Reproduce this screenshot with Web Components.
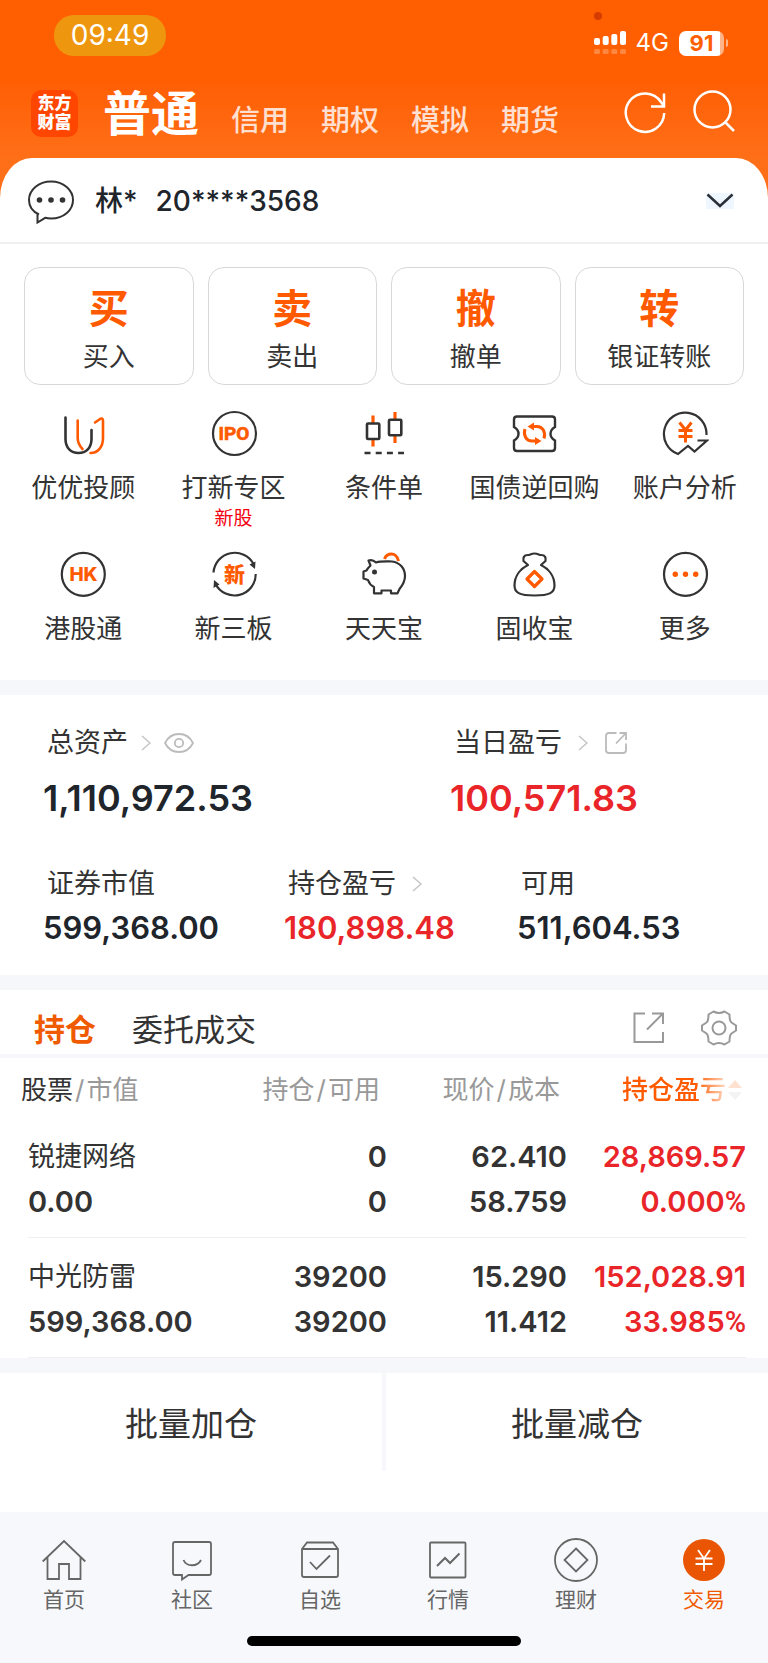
<!DOCTYPE html>
<html lang="zh-CN">
<head>
<meta charset="utf-8">
<meta name="viewport" content="width=device-width, initial-scale=1">
<title>交易</title>
<style>
    body {
        margin: 0;
        background: #f6f7fa;
        color: #333;
        font-family: Inter, "Noto Sans CJK SC", sans-serif;
    }
</style>
</head>
<body>
<trade-page></trade-page>

<script>
const ORANGE = '#ff5a00';

// name: [width, height, markup]
const ICONS = {
    signal: [32, 24, `<g fill="#fff"><rect y="7" width="6" height="7" rx="2"/><rect x="8.700" y="5" width="6" height="9" rx="2"/><rect x="17.300" y="3" width="6" height="11" rx="2"/><rect x="26" width="6" height="14" rx="2"/></g>
        <g fill="#fff" opacity=".25"><rect y="18" width="6" height="5" rx="1.500"/><rect x="8.700" y="18" width="6" height="5" rx="1.500"/><rect x="17.300" y="18" width="6" height="5" rx="1.500"/><rect x="26" y="18" width="6" height="5" rx="1.500"/></g>`],
    refresh: [44, 44, `<g fill="none" stroke="#fff" stroke-width="2.500"><path d="M41.200 23A19.200 19.200 0 1 1 38 12L41 16"/><path d="M41 3.500V16.500H28"/></g>`],
    search: [44, 44, `<g fill="none" stroke="#fff" stroke-width="2.500"><circle cx="21.500" cy="19.500" r="18"/><path d="M33.500 31.500L43 41"/></g>`],
    chat: [48, 48, `<path d="M12 37.500C5.500 34.500 2 29.500 2 23C2 13 11.500 4.500 24 4.500s22 8.500 22 18.500S37 41.500 24 41.500c-2 0-4-.2-5.800-.7L10.500 45.500V37" fill="none" stroke="#333" stroke-width="2"/><g fill="#333"><circle cx="12.500" cy="23" r="2.800"/><circle cx="24" cy="23" r="2.800"/><circle cx="35.500" cy="23" r="2.800"/></g>`],
    down: [28, 16, `<rect width="28" height="16" fill="#eef6ff"/><path d="M1.500 1.500L14 13L26.500 1.500" fill="none" stroke="#2b2f36" stroke-width="2.500"/>`],
    right: [10, 16, `<path d="M1 1L9 8L1 15" fill="none" stroke="#c4c4c4" stroke-width="1.500"/>`],
    eye: [30, 20, `<g fill="none" stroke="#bbb" stroke-width="1.800"><path d="M1 10C4 4 9 1 15 1s11 3 14 9c-3 6-8 9-14 9S4 16 1 10Z"/><circle cx="15" cy="10" r="4.200"/></g>`],
    share: [24, 24, `<g fill="none" stroke="#bbb" stroke-width="1.800"><path d="M12.500 2H5Q2 2 2 5V19Q2 22 5 22H19Q22 22 22 19V12.500"/><path d="M15.500 2H22V9M22 2L12 12.500"/></g>`],
    shareBig: [36, 36, `<g fill="none" stroke="#999" stroke-width="2"><path d="M15 3.500H4.500V32H33V22"/><path d="M22 3.500H33V14M33 3.500L17 19.500"/></g>`],
    gear: [36, 36, `<g fill="none" stroke="#999" stroke-width="2" stroke-linejoin="round"><path d="M12.500 1.500Q18 4.500 23.500 1.500L28.500 4.500Q28.500 11 30.500 12.500L35 15.500V20.500L30.500 23.500Q28.500 25 28.500 31.500L23.500 34.500Q18 31.500 12.500 34.500L7.500 31.500Q7.500 25 5.500 23.500L1 20.500V15.500L5.500 12.500Q7.500 11 7.500 4.500Z"/><circle cx="18" cy="18" r="6.500"/></g>`],
    sort: [14, 20, `<path d="M7 0L14 8H0Z" fill="${ORANGE}"/><path d="M7 20L0 12H14Z" fill="#bbb"/>`],

    advisor: [48, 48, `<g fill="none" stroke-width="2.600" stroke-linecap="round"><path d="M6.500 8.500V30C6.500 39 12 44 19.500 44S32.500 39 32.500 30V21" stroke="#333"/><path d="M18.700 11.500V29c0 5 2 8 4.800 11M36 13.500L41 10Q44 8.500 44 11.500V29C44 38 39 44 31.500 44" stroke="${ORANGE}"/></g>`],
    ipo: [48, 48, `<circle cx="24.500" cy="24.500" r="21.500" fill="none" stroke="#333" stroke-width="2.200"/><text x="24" y="31" text-anchor="middle" font-family="Roboto, sans-serif" font-size="19" font-weight="700" fill="${ORANGE}" stroke="${ORANGE}" stroke-width=".6">IPO</text>`],
    candles: [48, 48, `<g fill="none" stroke-width="2.600"><path d="M13 6.500V14M13 30V37.500M35 3V10.500M35 26.500V34" stroke="${ORANGE}" stroke-width="3.200"/><g stroke="#333"><rect x="7" y="14.500" width="12.300" height="15.500" rx="1"/><rect x="29" y="10.800" width="12.300" height="15.500" rx="1"/><path d="M4.500 44H44" stroke-dasharray="6 5.200"/></g></g>`],
    ticket: [48, 48, `<path d="M7 7.500H42Q45 7.500 45 10.500V18Q40.500 20.500 40.500 24.800T45 31.500V39Q45 42 42 42H7Q4 42 4 39V31.500Q8.500 29 8.500 24.800T4 18V10.500Q4 7.500 7 7.500Z" fill="none" stroke="#333" stroke-width="2.400"/>
        <g fill="none" stroke="${ORANGE}" stroke-width="3"><path d="M22 17.500H27C32.500 17.500 36 23 34 29.500M27 32H22C16.500 32 13 26.500 15 20"/></g><path d="M17.500 17.500L24 13.500V21.500ZM31.500 32L25 28V36Z" fill="${ORANGE}"/>`],
    analysis: [48, 48, `<path d="M45.500 26A21.300 21.300 0 1 0 17 45L27 37L33.500 42.500L46 31.500H36.500" fill="none" stroke="#333" stroke-width="2.200"/><path d="M18.500 13.500L24.500 21L30.500 13.500M24.500 21V33.500M17.500 21.500H31.500M17.500 27.500H31.500" fill="none" stroke="${ORANGE}" stroke-width="3"/>`],
    hk: [48, 48, `<circle cx="24.300" cy="24.300" r="21.500" fill="none" stroke="#333" stroke-width="2.200"/><text x="24.500" y="31" text-anchor="middle" font-family="Inter, sans-serif" font-size="19" font-weight="800" fill="${ORANGE}">HK</text>`],
    neeq: [48, 48, `<path d="M3.500 22.500A21.300 21.300 0 0 1 43.500 14M45.700 24A21.300 21.300 0 0 1 5.500 34" fill="none" stroke="#333" stroke-width="2.200"/><path d="M45.500 11.500L45 19L39.500 14.500ZM3.500 38L4 30L9.500 34.500Z" fill="#333"/><text x="24.500" y="32" text-anchor="middle" font-family="Noto Sans CJK SC, sans-serif" font-size="21" font-weight="900" fill="${ORANGE}">新</text>`],
    pig: [48, 48, `<path d="M24.500 9C26 5 29 4 31.500 4S37.500 6 38.500 11" fill="none" stroke="${ORANGE}" stroke-width="3"/><path d="M8.500 10.500C11 9.500 14 10.500 16 12.500C21 11 27 11.500 32 11.500C40 12.500 45 18.500 45 26C45 32 42 36 39.500 39L37.500 43.300H31V40.500H21.500V43.300H14V37C11 35.500 9 33 8 30L3.500 28.500V21.500L6.500 20.500C7.500 18.500 9 17 10.500 15.500Z" fill="none" stroke="#333" stroke-width="2.200" stroke-linejoin="round"/><circle cx="14.500" cy="22" r="2.500" fill="#333"/>`],
    bag: [48, 48, `<path d="M18 15L13.500 11C13 8 13.500 5 18 5C20 5 21 3.500 24.500 3.500S29 5 31 5C35.500 5 36 8 35.500 11L31 15C38 18.500 44.500 25.500 44.500 35.500C44.500 42.500 40 45.500 24.500 45.500S4.500 42.500 4.500 35.500C4.500 25.500 11 18.500 18 15Z" fill="none" stroke="#333" stroke-width="2.200" stroke-linejoin="round"/><path d="M24.500 21.500L32 29L24.500 36.500L17 29Z" fill="none" stroke="${ORANGE}" stroke-width="3.200" stroke-linejoin="round"/>`],
    more: [48, 48, `<circle cx="24.500" cy="24.300" r="21.500" fill="none" stroke="#333" stroke-width="2.200"/><g fill="${ORANGE}"><circle cx="14.300" cy="24.300" r="2.700"/><circle cx="24.500" cy="24.300" r="2.700"/><circle cx="34.700" cy="24.300" r="2.700"/></g>`],

    home: [44, 44, `<path d="M.7 23.500L22 3L43.300 23.500M5.500 19.500V41H17V26H27V41H38.500V19.500" fill="none" stroke="#666" stroke-width="1.800"/>`],
    community: [44, 44, `<path d="M5 4H39Q41 4 41 6V35Q41 37 39 37H18.500L12 41.500V37H5Q3 37 3 35V6Q3 4 5 4ZM13.500 22C16.500 29 27.500 29 31 22" fill="none" stroke="#666" stroke-width="1.800"/>`],
    watch: [44, 44, `<path d="M4 11L9 4.500H35L40 11V37Q40 39 38 39H6Q4 39 4 37ZM4 11H40M12 24L18.500 31L32 17.500" fill="none" stroke="#666" stroke-width="1.800"/>`],
    chart: [44, 44, `<path d="M11 28L19 20L24 25L33.500 15.500" fill="none" stroke="#666" stroke-width="2"/><rect x="4" y="4.500" width="35.500" height="35" rx="1" fill="none" stroke="#666" stroke-width="1.800"/>`],
    wealth: [44, 44, `<g fill="none" stroke="#666" stroke-width="1.800"><circle cx="22" cy="22" r="21"/><path d="M22 10.500L33.500 22L22 33.500L10.500 22Z"/></g>`],
    trade: [44, 44, `<circle cx="22" cy="22" r="21" fill="#ea5504"/><path d="M16 12L22 20.500L28 12M22 20.500V33M13.500 20.500H30.500M13.500 26H30.500" fill="none" stroke="#fff" stroke-width="1.800"/>`]
};

class AppIcon extends HTMLElement {
    constructor() {
        super();
        this.attachShadow({ mode: 'open' });
    }

    connectedCallback() {
        const [w, h, markup] = ICONS[this.getAttribute('name')];
        this.shadowRoot.innerHTML = `
            <style>
                :host { display: inline-flex; flex: none; }
                svg { display: block; }
            </style>
            <svg width="${w}" height="${h}" viewBox="0 0 ${w} ${h}" aria-hidden="true">${markup}</svg>
        `;
    }
}

class StatusBar extends HTMLElement {
    connectedCallback() {
        this.attachShadow({ mode: 'open' }).innerHTML = `
            <style>
                :host {
                    display: flex;
                    justify-content: space-between;
                    align-items: flex-start;
                    height: 68px;
                    padding: 15px 40px 0 54px;
                    background: #ff5f00;
                    color: white;
                }
                .time {
                    width: 112px;
                    border-radius: 20px;
                    background: #ee960e;
                    font-size: 28px;
                    line-height: 41px;
                    text-align: center;
                }
                .radio {
                    position: relative;
                    display: flex;
                    align-items: center;
                    gap: 10px;
                    padding-top: 14px;
                    font-size: 24px;
                    line-height: 28px;
                }
                .mic {
                    position: absolute;
                    top: -3px;
                    left: 0;
                    width: 8px;
                    height: 8px;
                    border-radius: 50%;
                    background: #d63c00;
                }
                .battery {
                    display: flex;
                    align-items: center;
                    gap: 2px;
                }
                .level {
                    width: 45px;
                    border-radius: 7px;
                    background: linear-gradient(to right, #fff 41px, #ffb489 41px);
                    color: #ff5f00;
                    font-size: 22px;
                    font-weight: 700;
                    line-height: 25px;
                    text-align: center;
                }
                .tip {
                    width: 2px;
                    height: 8px;
                    border-radius: 0 2px 2px 0;
                    background: #ffb489;
                }
            </style>
            <span class="time">09:49</span>
            <div class="radio">
                <span class="mic"></span>
                <app-icon name="signal"></app-icon>
                <span>4G</span>
                <span class="battery"><span class="level">91</span><span class="tip"></span></span>
            </div>
        `;
    }
}

class MarketHeader extends HTMLElement {
    connectedCallback() {
        this.attachShadow({ mode: 'open' }).innerHTML = `
            <style>
                :host {
                    display: flex;
                    align-items: flex-start;
                    height: 68px;
                    padding: 7px 33px 0 31px;
                    color: white;
                }
                .logo {
                    box-sizing: border-box;
                    width: 47px;
                    height: 47px;
                    padding: 4px 0;
                    border-radius: 10px;
                    background: #ff4600;
                    font-size: 17px;
                    font-weight: 900;
                    line-height: 19px;
                    text-align: center;
                }
                nav {
                    display: flex;
                    flex: 1;
                    align-items: baseline;
                    gap: 32px;
                    margin-left: 25px;
                }
                a {
                    color: #ffdfcf;
                    font-size: 29px;
                    font-weight: 500;
                    line-height: 48px;
                    text-decoration: none;
                }
                a.on {
                    color: white;
                    font-size: 48px;
                    font-weight: 700;
                }
                button {
                    margin: 0 0 0 24px;
                    padding: 0;
                    border: 0;
                    background: none;
                }
            </style>
            <div class="logo">东方<br>财富</div>
            <nav>
                <a class="on" href="#normal">普通</a>
                <a href="#credit">信用</a>
                <a href="#option">期权</a>
                <a href="#mock">模拟</a>
                <a href="#future">期货</a>
            </nav>
            <button aria-label="刷新"><app-icon name="refresh"></app-icon></button>
            <button aria-label="搜索"><app-icon name="search"></app-icon></button>
        `;
    }
}

class AccountBar extends HTMLElement {
    connectedCallback() {
        this.attachShadow({ mode: 'open' }).innerHTML = `
            <style>
                :host {
                    display: block;
                    border-bottom: 2px solid #f0f0f0;
                }
                button {
                    display: flex;
                    align-items: center;
                    width: 100%;
                    height: 84px;
                    padding: 2px 34px 0 27px;
                    border: 0;
                    background: none;
                    color: #20242b;
                    font: 500 28px/40px Inter, "Noto Sans CJK SC", sans-serif;
                }
                .name { margin: 0 18px 0 20px; }
                .no { flex: 1; text-align: left; }
            </style>
            <button>
                <app-icon name="chat"></app-icon>
                <span class="name">林*</span>
                <span class="no">20****3568</span>
                <app-icon name="down"></app-icon>
            </button>
        `;
    }
}

class TradeCard extends HTMLElement {
    connectedCallback() {
        this.attachShadow({ mode: 'open' }).innerHTML = `
            <style>
                :host { display: block; }
                button {
                    display: flex;
                    flex-direction: column;
                    align-items: center;
                    gap: 7px;
                    width: 100%;
                    padding: 14px 0 11px;
                    border: 1px solid #d8d8d8;
                    border-radius: 16px;
                    background: white;
                    color: #333;
                    font: 26px/36px "Noto Sans CJK SC", sans-serif;
                }
                b {
                    color: ${ORANGE};
                    font-size: 40px;
                    line-height: 48px;
                }
            </style>
            <button><b>${this.getAttribute('mark')}</b><span><slot></slot></span></button>
        `;
    }
}

class FuncItem extends HTMLElement {
    connectedCallback() {
        const note = this.getAttribute('note');
        this.attachShadow({ mode: 'open' }).innerHTML = `
            <style>
                :host { display: block; }
                a {
                    display: flex;
                    flex-direction: column;
                    align-items: center;
                    color: #333;
                    font-size: 26px;
                    line-height: 36px;
                    white-space: nowrap;
                    text-decoration: none;
                }
                .label { margin-top: 13px; }
                .note {
                    color: #f5000f;
                    font-size: 19px;
                    line-height: 26px;
                }
            </style>
            <a href="#${this.getAttribute('icon')}">
                <app-icon name="${this.getAttribute('icon')}"></app-icon>
                <span class="label"><slot></slot></span>
                ${note ? `<span class="note">${note}</span>` : ''}
            </a>
        `;
    }
}

class AssetFigure extends HTMLElement {
    connectedCallback() {
        this.attachShadow({ mode: 'open' }).innerHTML = `
            <style>
                :host { display: block; }
                .label {
                    display: flex;
                    align-items: center;
                    gap: var(--icon-gap, 16px);
                    padding-left: 4px;
                    font-size: 27px;
                    line-height: 40px;
                }
                .value {
                    margin-top: 4px;
                    color: #20242b;
                    font-size: 31px;
                    font-weight: 600;
                    line-height: 40px;
                }
                :host([big]) .value {
                    margin-top: 9px;
                    font-size: 36px;
                    line-height: 52px;
                }
                :host([up]) .value { color: #e92529; }
            </style>
            <div class="label">${this.getAttribute('label')}<slot></slot></div>
            <div class="value">${this.getAttribute('value')}</div>
        `;
    }
}

const HOLDINGS = [
    ['锐捷网络', '0.00', '0', '0', '62.410', '58.759', '28,869.57', '0.000'],
    ['中光防雷', '599,368.00', '39200', '39200', '15.290', '11.412', '152,028.91', '33.985']
];

class HoldingsTable extends HTMLElement {
    connectedCallback() {
        const rows = HOLDINGS.map(([name, value, held, free, price, cost, gain, rate]) => `
            <tr>
                <td><div class="name">${name}</div><div>${value}</div></td>
                <td><div>${held}</div><div>${free}</div></td>
                <td><div>${price}</div><div>${cost}</div></td>
                <td class="up"><div>${gain}</div><div>${rate}<span class="pct">%</span></div></td>
            </tr>
        `).join('');

        this.attachShadow({ mode: 'open' }).innerHTML = `
            <style>
                :host { display: block; }
                table {
                    width: 100%;
                    border-collapse: collapse;
                    table-layout: fixed;
                }
                .c2 { width: 187px; }
                .c3 { width: 180px; }
                .c4 { width: 201px; }
                th {
                    padding: 14px 7px 10px 0;
                    color: #999;
                    font-size: 26px;
                    font-weight: 400;
                    line-height: 36px;
                    text-align: right;
                    white-space: nowrap;
                }
                th:first-child {
                    padding-left: 21px;
                    text-align: left;
                }
                th:last-child { padding-right: 26px; }
                th em { color: #333; font-style: normal; }
                th i { padding: 0 2px; font-style: normal; }
                button {
                    display: inline-flex;
                    align-items: center;
                    gap: 2px;
                    padding: 0;
                    border: 0;
                    background: none;
                    color: ${ORANGE};
                    font: inherit;
                    font-weight: 500;
                    vertical-align: top;
                    -webkit-mask-image: linear-gradient(to right, #000 74px, rgba(0, 0, 0, .18) 106px);
                    mask-image: linear-gradient(to right, #000 74px, rgba(0, 0, 0, .18) 106px);
                }
                tbody tr {
                    background: linear-gradient(#efefef, #efefef) 28px 100% / calc(100% - 50px) 1px no-repeat;
                }
                td {
                    height: 90px;
                    padding: 16px 0 14px;
                    font-size: 29px;
                    font-weight: 600;
                    line-height: 45px;
                    text-align: right;
                    vertical-align: top;
                    white-space: nowrap;
                }
                td:first-child {
                    padding-left: 28px;
                    text-align: left;
                }
                td:last-child { padding-right: 22px; }
                .name {
                    font-size: 27px;
                    font-weight: 400;
                }
                .up { color: #e92529; }
                .pct {
                    font-family: Roboto, sans-serif;
                    font-weight: 500;
                    line-height: 1;
                }
            </style>
            <table>
                <colgroup><col><col class="c2"><col class="c3"><col class="c4"></colgroup>
                <thead>
                    <tr>
                        <th><em>股票</em><i>/</i>市值</th>
                        <th>持仓<i>/</i>可用</th>
                        <th>现价<i>/</i>成本</th>
                        <th><button>持仓盈亏<app-icon name="sort"></app-icon></button></th>
                    </tr>
                </thead>
                <tbody>${rows}</tbody>
            </table>
        `;
    }
}

class HoldingsTabs extends HTMLElement {
    connectedCallback() {
        this.attachShadow({ mode: 'open' }).innerHTML = `
            <style>
                :host {
                    display: flex;
                    align-items: center;
                    padding: 14px 31px 2px 34px;
                    border-bottom: 4px solid #f6f8fb;
                }
                button {
                    margin: 0 36px 0 0;
                    padding: 0;
                    border: 0;
                    background: none;
                    color: #333;
                    font: 31px/48px "Noto Sans CJK SC", sans-serif;
                }
                .on { color: #f05a00; font-weight: 700; }
                .tool {
                    display: flex;
                    margin: 0 0 0 35px;
                }
                .space { flex: 1; }
            </style>
            <button class="on">持仓</button>
            <button>委托成交</button>
            <span class="space"></span>
            <button class="tool" aria-label="分享"><app-icon name="shareBig"></app-icon></button>
            <button class="tool" aria-label="设置"><app-icon name="gear"></app-icon></button>
        `;
    }
}

class BatchActions extends HTMLElement {
    connectedCallback() {
        this.attachShadow({ mode: 'open' }).innerHTML = `
            <style>
                :host {
                    display: flex;
                    padding-bottom: 41px;
                    background: white;
                }
                button {
                    flex: 1;
                    padding: 25px 0;
                    border: 0;
                    background: none;
                    color: #333;
                    font: 33px/48px "Noto Sans CJK SC", sans-serif;
                }
                button + button { border-left: 4px solid #f6f8fb; }
            </style>
            <button>批量加仓</button>
            <button>批量减仓</button>
        `;
    }
}

class TabItem extends HTMLElement {
    connectedCallback() {
        this.attachShadow({ mode: 'open' }).innerHTML = `
            <style>
                :host { display: block; flex: 1; }
                a {
                    display: flex;
                    flex-direction: column;
                    align-items: center;
                    gap: 4px;
                    color: #666;
                    font-size: 21px;
                    line-height: 28px;
                    text-decoration: none;
                }
                :host([active]) a { color: #f05a00; }
            </style>
            <a href="#${this.getAttribute('icon')}">
                <app-icon name="${this.getAttribute('icon')}"></app-icon>
                <slot></slot>
            </a>
        `;
    }
}

class TabBar extends HTMLElement {
    connectedCallback() {
        this.attachShadow({ mode: 'open' }).innerHTML = `
            <style>
                :host {
                    display: block;
                    padding: 26px 0 16px;
                    background: #f7f8fb;
                }
                nav { display: flex; }
                .grip {
                    width: 274px;
                    height: 10px;
                    margin: 22px auto 0;
                    border-radius: 5px;
                    background: black;
                }
            </style>
            <nav><slot></slot></nav>
            <div class="grip"></div>
        `;
    }
}

class TradePage extends HTMLElement {
    connectedCallback() {
        this.attachShadow({ mode: 'open' }).innerHTML = `
            <style>
                :host { display: block; }
                .top { background: linear-gradient(#ff5f05, #ff6f18 75px); }
                .sheet {
                    border-radius: 32px 32px 0 0 / 40px 40px 0 0;
                    background: white;
                }
                .cards {
                    display: grid;
                    grid-template-columns: repeat(4, 1fr);
                    gap: 14px;
                    padding: 23px 24px 24px;
                }
                .funcs {
                    display: grid;
                    grid-template-columns: repeat(5, 1fr);
                    row-gap: 18px;
                    padding: 0 8px 33px;
                }
                .assets {
                    margin: 15px 0;
                    padding: 28px 43px 27px;
                    background: white;
                }
                .row { display: grid; }
                .total {
                    grid-template-columns: 407fr 275fr;
                    --icon-gap: 13px;
                }
                .total [up] { --icon-gap: 16px; }
                .detail {
                    grid-template-columns: 241fr 233fr 208fr;
                    margin-top: 40px;
                }
                .holdings {
                    margin-bottom: 15px;
                    background: white;
                }
            </style>
            <status-bar></status-bar>
            <div class="top">
                <market-header></market-header>
                <section class="sheet">
                    <account-bar></account-bar>
                    <div class="cards">
                        <trade-card mark="买">买入</trade-card>
                        <trade-card mark="卖">卖出</trade-card>
                        <trade-card mark="撤">撤单</trade-card>
                        <trade-card mark="转">银证转账</trade-card>
                    </div>
                    <div class="funcs">
                        <func-item icon="advisor">优优投顾</func-item>
                        <func-item icon="ipo" note="新股">打新专区</func-item>
                        <func-item icon="candles">条件单</func-item>
                        <func-item icon="ticket">国债逆回购</func-item>
                        <func-item icon="analysis">账户分析</func-item>
                        <func-item icon="hk">港股通</func-item>
                        <func-item icon="neeq">新三板</func-item>
                        <func-item icon="pig">天天宝</func-item>
                        <func-item icon="bag">固收宝</func-item>
                        <func-item icon="more">更多</func-item>
                    </div>
                </section>
            </div>
            <section class="assets">
                <div class="row total">
                    <asset-figure big label="总资产" value="1,110,972.53"><app-icon name="right"></app-icon><app-icon name="eye"></app-icon></asset-figure>
                    <asset-figure big up label="当日盈亏" value="100,571.83"><app-icon name="right"></app-icon><app-icon name="share"></app-icon></asset-figure>
                </div>
                <div class="row detail">
                    <asset-figure label="证券市值" value="599,368.00"></asset-figure>
                    <asset-figure up label="持仓盈亏" value="180,898.48"><app-icon name="right"></app-icon></asset-figure>
                    <asset-figure label="可用" value="511,604.53"></asset-figure>
                </div>
            </section>
            <section class="holdings">
                <holdings-tabs></holdings-tabs>
                <holdings-table></holdings-table>
            </section>
            <batch-actions></batch-actions>
            <tab-bar>
                <tab-item icon="home">首页</tab-item>
                <tab-item icon="community">社区</tab-item>
                <tab-item icon="watch">自选</tab-item>
                <tab-item icon="chart">行情</tab-item>
                <tab-item icon="wealth">理财</tab-item>
                <tab-item icon="trade" active>交易</tab-item>
            </tab-bar>
        `;
    }
}

customElements.define('app-icon', AppIcon);
customElements.define('status-bar', StatusBar);
customElements.define('market-header', MarketHeader);
customElements.define('account-bar', AccountBar);
customElements.define('trade-card', TradeCard);
customElements.define('func-item', FuncItem);
customElements.define('asset-figure', AssetFigure);
customElements.define('holdings-tabs', HoldingsTabs);
customElements.define('holdings-table', HoldingsTable);
customElements.define('batch-actions', BatchActions);
customElements.define('tab-item', TabItem);
customElements.define('tab-bar', TabBar);
customElements.define('trade-page', TradePage);
</script>
</body>
</html>
